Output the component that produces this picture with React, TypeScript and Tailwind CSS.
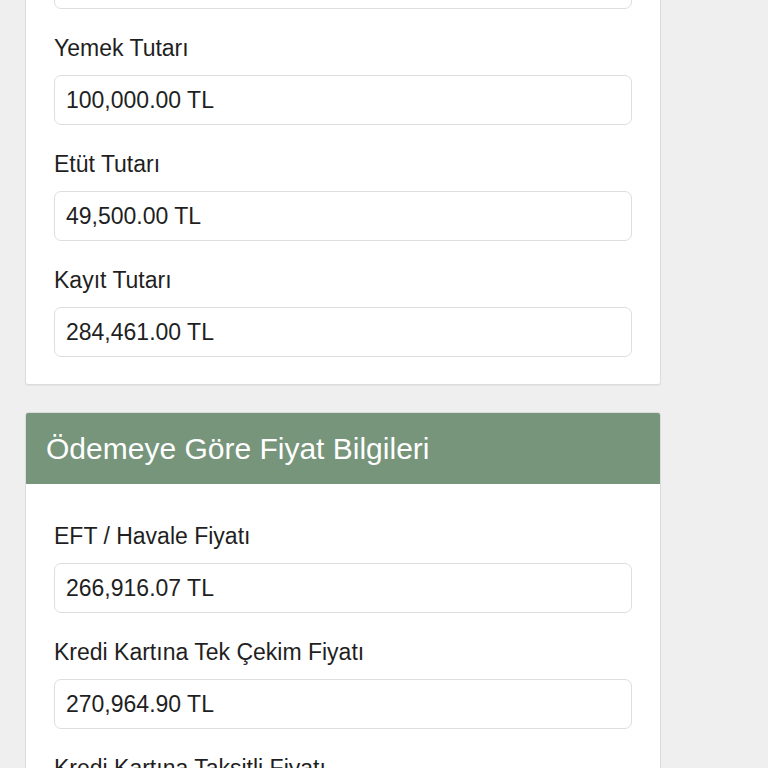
const font = { fontFamily: '"Liberation Sans", Arial, Helvetica, sans-serif' };

function Field({ label, value }: { label: string; value: string }) {
  return (
    <div className="mt-[26px]">
      <div className="h-[26px] leading-[26px] text-[23px] text-[#1f1f1f] mb-[14px]">{label}</div>
      <div className="h-[50px] rounded-[7px] border border-[#dedede] bg-white px-[11px] flex items-center text-[23px] text-[#1f1f1f]">
        {value}
      </div>
    </div>
  );
}

export default function App() {
  return (
    <div className="min-h-screen w-[768px] bg-[#efefef] overflow-hidden" style={font}>
      <div className="ml-[25px] w-[636px]">
        <div className="-mt-[42px] bg-white border border-[#dcdcdc] rounded-[3px] shadow-[0_1px_1px_rgba(0,0,0,0.05)] px-[28px] pb-[27px]">
          <div className="h-[50px] rounded-[7px] border border-[#dedede] bg-white" />
          <Field label="Yemek Tutarı" value="100,000.00 TL" />
          <Field label="Etüt Tutarı" value="49,500.00 TL" />
          <Field label="Kayıt Tutarı" value="284,461.00 TL" />
        </div>

        <div className="mt-[27px] bg-white border border-[#dcdcdc] rounded-[3px] shadow-[0_1px_1px_rgba(0,0,0,0.05)] overflow-hidden">
          <div className="h-[71px] bg-[#76957a] px-[20px] flex items-center text-[30px] text-white">
            Ödemeye Göre Fiyat Bilgileri
          </div>
          <div className="px-[28px] pt-[13px] pb-[27px]">
            <Field label="EFT / Havale Fiyatı" value="266,916.07 TL" />
            <Field label="Kredi Kartına Tek Çekim Fiyatı" value="270,964.90 TL" />
            <Field label="Kredi Kartına Taksitli Fiyatı" value="283,500.00 TL" />
          </div>
        </div>
      </div>
    </div>
  );
}
